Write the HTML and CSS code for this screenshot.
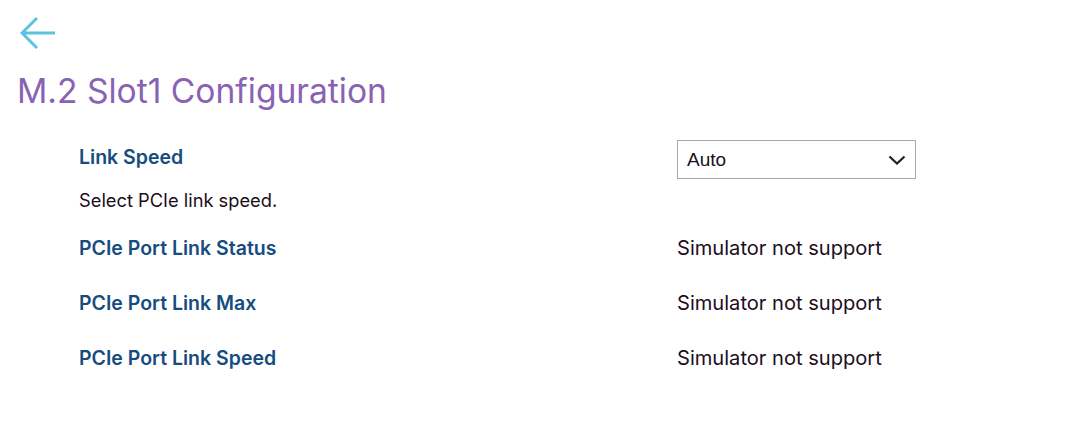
FILE: index.html
```html
<!DOCTYPE html>
<html>
<head>
<meta charset="utf-8">
<link rel="stylesheet" href="styles.css">
</head>
<body>
<div class="page">
  <button class="back" aria-label="Back">
    <svg width="36" height="36" viewBox="0 0 36 36"><path d="M35 17H3M17 2L2 17l15 15" fill="none" stroke="#5bc3df" stroke-width="3" stroke-linecap="butt" stroke-linejoin="miter"/></svg>
  </button>
  <h1 class="title">M.2 Slot1 Configuration</h1>
  <div class="form">
    <div class="row row-select">
      <div class="label-col">
        <div class="label">Link Speed</div>
        <div class="help">Select PCIe link speed.</div>
      </div>
      <div class="value-col">
        <div class="select">
          <span>Auto</span>
          <svg width="18" height="10" viewBox="0 0 18 10"><path d="M1.5 1.5L9 8.5l7.5-7" fill="none" stroke="#2a1a24" stroke-width="2.2"/></svg>
        </div>
      </div>
    </div>
    <div class="row">
      <div class="label">PCIe Port Link Status</div>
      <div class="value">Simulator not support</div>
    </div>
    <div class="row">
      <div class="label">PCIe Port Link Max</div>
      <div class="value">Simulator not support</div>
    </div>
    <div class="row">
      <div class="label">PCIe Port Link Speed</div>
      <div class="value">Simulator not support</div>
    </div>
  </div>
</div>
</body>
</html>
```
FILE: styles.css
```css
html, body { margin: 0; padding: 0; background: #fff; }
body { font-family: "Inter", "Noto Sans", sans-serif; }
.page { padding: 16px 0 0 17px; }
.back { display: block; border: 0; background: none; padding: 0; margin: 0 0 0 3px; width: 36px; height: 36px; cursor: pointer; }
.back svg { display: block; }
.title { margin: 19px 0 0 0; font-size: 33.6px; font-weight: 400; color: #8a62b3; line-height: 40px; letter-spacing: 0; }
.form { padding: 29px 0 0 62px; }
.row { display: flex; align-items: center; height: 55px; }
.row-select { align-items: flex-start; height: auto; padding-bottom: 9px; }
.label-col { width: 598px; }
.label { width: 598px; font-size: 19.5px; font-weight: 600; color: #174c80; }
.row-select .label { margin-top: 5px; }
.help { margin-top: 20px; font-size: 18.3px; color: #1c0e1c; }
.value { font-size: 20.1px; color: #1c0e1c; }
.select { box-sizing: border-box; width: 239px; height: 39px; margin-top: 0; border: 1px solid #a9a9a9; display: flex; align-items: center; justify-content: space-between; padding: 1px 9px 0 9px; font-family: "Liberation Sans", Arial, sans-serif; font-size: 19px; color: #1a1020; }
.select svg { display: block; margin-top: -1px; }
```
